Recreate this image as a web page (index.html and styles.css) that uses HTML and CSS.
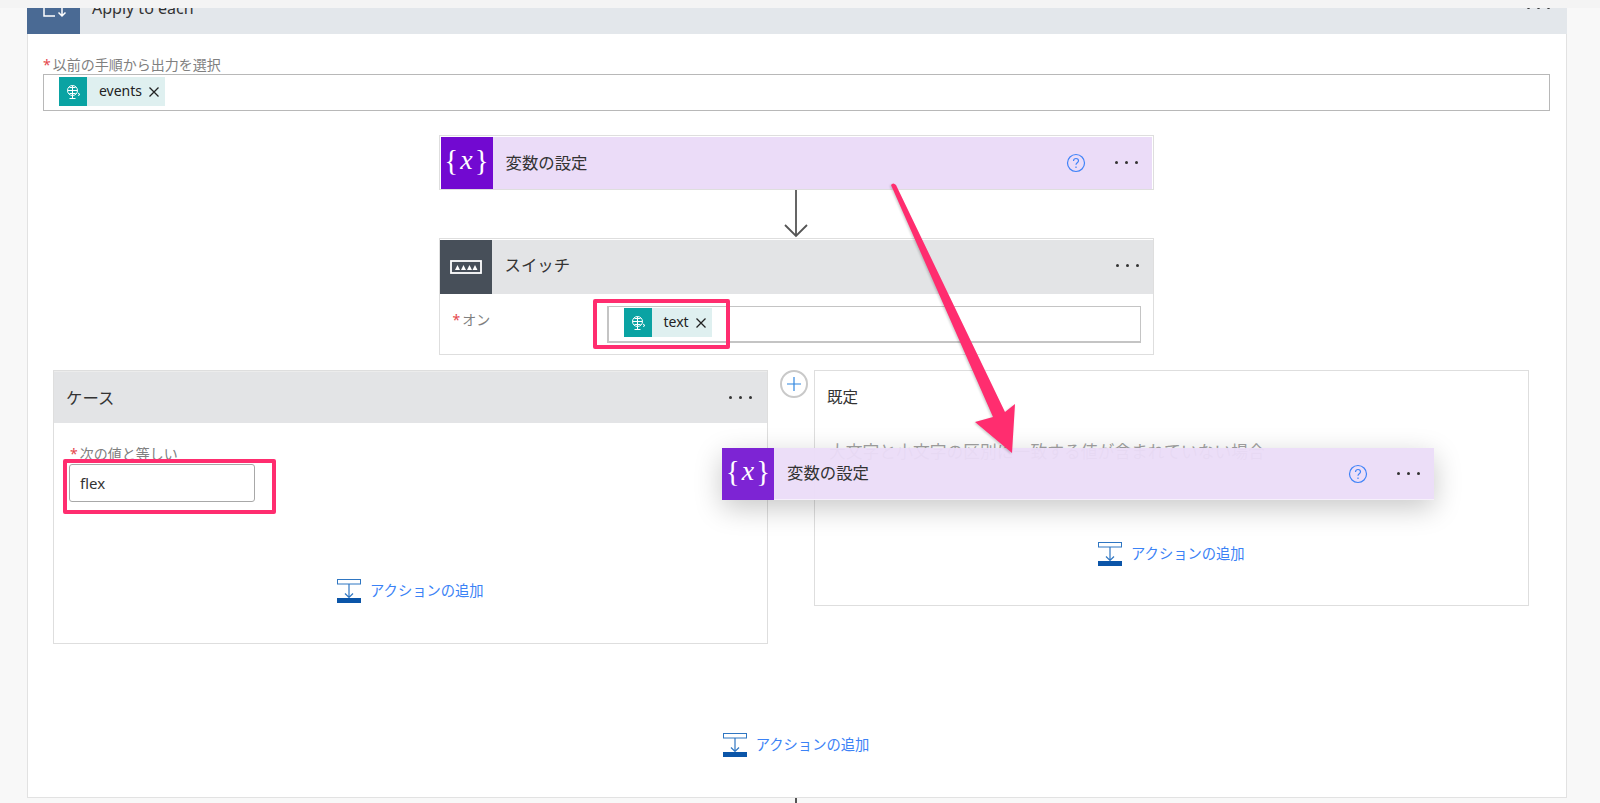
FILE: index.html
```html
<!DOCTYPE html>
<html lang="ja">
<head>
<meta charset="utf-8">
<title>Apply to each</title>
<link rel="stylesheet" href="styles.css">
</head>
<body>
<div class="page">
  <div class="topstrip"></div>

  <div class="loop">
    <div class="loop-head">
      <div class="loop-icon">
        <svg width="30" height="30" viewBox="0 0 30 30" fill="none" stroke="#fff" stroke-width="1.5"><path d="M5 5v18h11"/><path d="M23 14v9M19.500 19.500l3.500 3.500 3.500-3.500"/></svg>
      </div>
      <span class="loop-title">Apply to each</span>
      <span class="dots loop-dots"><i></i><i></i><i></i></span>
    </div>

    <div class="loop-body">
      <div class="field-label"><b>*</b>以前の手順から出力を選択</div>
      <div class="tokenbox">
        <span class="token">
          <span class="token-icon"><svg width="18" height="18" viewBox="0 0 18 18" fill="none" stroke="#fff" stroke-width="1"><circle cx="8.500" cy="7.500" r="5"/><path d="M3.500 7.500h10M8.500 2.500v10M5.500 4.500h6M5.500 10.500h6"/><path d="M8.500 12.500v3M5.500 15.500h6M14 10l2 1.500-2 1"/></svg></span>
          <span class="token-text">events</span>
          <svg class="token-x" width="12" height="12" viewBox="0 0 12 12" stroke="#222" stroke-width="1.300"><path d="M1.500 1.500l9 9M10.500 1.500l-9 9"/></svg>
        </span>
      </div>

      <div class="action action-var">
        <div class="action-head">
          <div class="action-icon icon-var"><span class="brace">{</span><span class="var-x">x</span><span class="brace">}</span></div>
          <span class="action-title">変数の設定</span>
          <svg class="help" width="20" height="20" viewBox="0 0 20 20" fill="none" stroke="#3f83f8" stroke-width="1.200"><circle cx="10" cy="10" r="8.500"/><path d="M7.500 8c0-1.500 1.100-2.500 2.500-2.500s2.500 1 2.500 2.300c0 2-2.500 2-2.500 4"/><path d="M10 13.500v1.500"/></svg>
          <span class="dots"><i></i><i></i><i></i></span>
        </div>
      </div>

      <svg class="connector" width="24" height="48" viewBox="0 0 24 48" fill="none" stroke="#555" stroke-width="1.800"><path d="M12 0v46M1 35l11 11 11-11"/></svg>

      <div class="action action-switch">
        <div class="action-head head-grey switch-head">
          <div class="action-icon icon-switch">
            <svg width="32" height="14" viewBox="0 0 32 14"><rect x="1" y="1" width="30" height="12" fill="none" stroke="#fff" stroke-width="1.800"/><path fill="#fff" d="M5 10l2.500-5 2.500 5zM11 10l2.500-5 2.500 5zM17 10l2.500-5 2.500 5zM22.500 10l2.500-5 2.500 5z"/></svg>
          </div>
          <span class="action-title">スイッチ</span>
          <span class="dots"><i></i><i></i><i></i></span>
        </div>
        <div class="switch-body">
          <div class="switch-label"><b>*</b>オン</div>
          <div class="tokenbox switch-box">
            <span class="token">
              <span class="token-icon"><svg width="18" height="18" viewBox="0 0 18 18" fill="none" stroke="#fff" stroke-width="1"><circle cx="8.500" cy="7.500" r="5"/><path d="M3.500 7.500h10M8.500 2.500v10M5.500 4.500h6M5.500 10.500h6"/><path d="M8.500 12.500v3M5.500 15.500h6M14 10l2 1.500-2 1"/></svg></span>
              <span class="token-text">text</span>
              <svg class="token-x" width="12" height="12" viewBox="0 0 12 12" stroke="#222" stroke-width="1.300"><path d="M1.500 1.500l9 9M10.500 1.500l-9 9"/></svg>
            </span>
          </div>
        </div>
      </div>

      <div class="branches">
        <div class="branch branch-case">
          <div class="branch-head head-grey">
            <span class="action-title">ケース</span>
            <span class="dots"><i></i><i></i><i></i></span>
          </div>
          <div class="case-body">
            <div class="field-label case-label"><b>*</b>次の値と等しい</div>
            <div class="case-input">flex</div>
          </div>
          <a class="add-action case-add">
            <svg width="25" height="24" viewBox="0 0 25 24" fill="none"><rect x="0.500" y="0.500" width="23" height="4.500" stroke="#2f76c2"/><path d="M12 5v13M8 14.500l4 4 4-4" stroke="#2f76c2" stroke-width="1.200"/><rect y="19" width="24" height="5" fill="#0b55a8"/></svg>
            <span>アクションの追加</span>
          </a>
        </div>

        <div class="plus-col">
          <span class="plus"><svg width="14" height="14" viewBox="0 0 14 14" stroke="#2f86e0" stroke-width="1.200"><path d="M7 0v14M0 7h14"/></svg></span>
        </div>

        <div class="branch branch-default">
          <div class="default-title">既定</div>
          <div class="default-note">大文字と小文字の区別に一致する値が含まれていない場合</div>
          <a class="add-action default-add">
            <svg width="25" height="24" viewBox="0 0 25 24" fill="none"><rect x="0.500" y="0.500" width="23" height="4.500" stroke="#2f76c2"/><path d="M12 5v13M8 14.500l4 4 4-4" stroke="#2f76c2" stroke-width="1.200"/><rect y="19" width="24" height="5" fill="#0b55a8"/></svg>
            <span>アクションの追加</span>
          </a>
        </div>
      </div>

      <a class="add-action loop-add">
        <svg width="25" height="24" viewBox="0 0 25 24" fill="none"><rect x="0.500" y="0.500" width="23" height="4.500" stroke="#2f76c2"/><path d="M12 5v13M8 14.500l4 4 4-4" stroke="#2f76c2" stroke-width="1.200"/><rect y="19" width="24" height="5" fill="#0b55a8"/></svg>
        <span>アクションの追加</span>
      </a>
    </div>
  </div>
  <div class="tail"></div>

  <div class="action-float">
    <div class="action-icon icon-float"><span class="brace">{</span><span class="var-x">x</span><span class="brace">}</span></div>
    <span class="action-title">変数の設定</span>
    <svg class="help" width="20" height="20" viewBox="0 0 20 20" fill="none" stroke="#3f83f8" stroke-width="1.200"><circle cx="10" cy="10" r="8.500"/><path d="M7.500 8c0-1.500 1.100-2.500 2.500-2.500s2.500 1 2.500 2.300c0 2-2.500 2-2.500 4"/><path d="M10 13.500v1.500"/></svg>
    <span class="dots"><i></i><i></i><i></i></span>
  </div>

  <div class="mark mark-switch"></div>
  <div class="mark mark-case"></div>

  <svg class="arrow" width="1600" height="803" viewBox="0 0 1600 803">
    <path fill="#ff2d6f" d="M891 185Q893 182 896 185L1005 412 1015 404 1012 453 975 422 993 417Z"/>
  </svg>
</div>
</body>
</html>
```

FILE: styles.css
```css
* {box-sizing: border-box;}
body {margin: 0; font-family: "Noto Sans", "Noto Sans CJK JP", sans-serif; color: #333;}
b {font-weight: normal; color: #e5484d; margin-right: 2px;}

.page {position: relative; height: 803px; overflow: hidden; background-color: #f8f8f8;}
.topstrip {position: relative; z-index: 1; height: 8px; background-color: #f4f4f4;}

.dots {display: flex; gap: 7px; margin-left: auto;}
.dots i {width: 3px; height: 3px; border-radius: 50%; background-color: #333;}

/* outer loop card */
.loop {width: 1540px; height: 817px; margin: -27px 0 0 27px; background-color: #fff; border: solid #e2e2e2; border-width: 0 1px 1px 1px;}
.loop-head {display: flex; align-items: center; height: 53px; margin: 0 -1px; padding-right: 17px; background-color: #e3e7eb;}
.loop-icon {display: flex; align-items: center; justify-content: center; width: 53px; height: 53px; background-color: #4a6a94;}
.loop-title {margin-left: 12px; font-size: 16px; color: #333;}
.loop-body {display: flex; flex-direction: column; align-items: flex-start; padding: 0 17px 0 15px;}

.field-label {height: 17px; margin-top: 22px; margin-bottom: 1px; font-size: 14px; line-height: 17px; color: #808080; white-space: nowrap;}
.tokenbox {display: flex; flex: none; align-items: center; width: 1507px; height: 37px; padding: 0 0 2px 15px; background-color: #fff; border: 1px solid #b8b8b8;}
.token {display: flex; align-items: center; height: 29px; background-color: #dff0f0;}
.token-icon {display: flex; align-items: center; justify-content: center; width: 28px; height: 29px; background-color: #0aa3a3;}
.token-text {margin: -2px 6px 0 12px; font-size: 14px; line-height: 29px; color: #222;}
.token-x {margin-right: 5px;}

/* action cards */
.action {width: 715px; background-color: #fff; border: 1px solid #dedede;}
.action-var {align-self: center; margin-top: 24px; padding: 1px; height: 55px;}
.action-head {display: flex; align-items: center; height: 52px; padding-right: 14px; background-color: #ebdcf8;}
.action-head .action-title {margin: -2px 0 0 13px;}
.action-head .dots {margin-top: -2px;}
.action-switch {align-self: center; height: 117px; padding-top: 1px;}
.switch-head {height: 54px;}
.switch-head .action-title {margin-top: -6px;}
.switch-head .dots {margin-top: -3px;}
.head-grey {background-color: #e3e4e6;}
.action-icon {display: flex; align-items: center; justify-content: center; flex: none; width: 52px; height: 52px; color: #fff;}
.switch-head .action-icon {height: 54px;}
.icon-var {background-color: #7209d1;}
.icon-float {background-color: #7d24d4;}
.icon-switch {background-color: #474f59;}
.action-title {margin-left: 12px; font-size: 16.400px; color: #333; white-space: nowrap;}
.brace {font: 29px "Liberation Serif", serif; line-height: 1; margin-top: -5px;}
.var-x {margin: -6px 2px 0; font: italic 28px "Liberation Serif", serif; line-height: 1;}
.help {margin-left: auto;}
.help + .dots {margin-left: 29px;}

.connector {align-self: center; flex: none; display: block;}

.switch-body {display: flex; padding: 12px 12px 0 13px;}
.switch-label {width: 155px; margin-top: 5px; font-size: 14px; line-height: 17px; color: #808080;}
.switch-box {width: 534px; padding: 0 0 3px 15px; border-color: #c4c4c4; border-width: 1px 1px 2px 2px;}
.switch-box .token-text {margin-top: -3px;}

/* case / default branches */
.branches {display: flex; align-items: flex-start; margin: 15px 0 0 10px;}
.branch {position: relative; flex: none; width: 715px; background-color: #fff; border: 1px solid #dedede;}
.branch-case {height: 274px;}
.branch-default {height: 236px;}
.branch-head {display: flex; align-items: center; height: 52px; padding-right: 15px; border-top: 1px solid #ececec;}
.branch-head .action-title {margin-top: -2px;}
.plus-col {flex: none; width: 46px; padding: 0 0 0 12px;}
.plus {display: flex; align-items: center; justify-content: center; width: 28px; height: 28px; border: 2px solid #c9c9c9; border-radius: 50%;}

.case-body {padding: 0 0 0 15px;}
.case-label {margin: 22px 0 0 1px; font-size: 14px;}
.case-input {width: 186px; height: 38px; margin-top: 2px; padding-left: 10px; border: 1px solid #a8a8a8; border-radius: 3px; font-size: 15px; line-height: 36px; color: #333;}
.case-add {margin: 77px 0 0 283px;}

.default-title {margin: 16px 0 0 12px; font-size: 15.500px; line-height: 20px; color: #333;}
.default-note {margin: 35px 0 0 14px; font-size: 16.800px; line-height: 20px; color: #a2a2a2; white-space: nowrap;}
.default-add {margin: 80px 0 0 283px;}

.add-action {display: flex; align-items: center; gap: 8px; font-size: 14.300px; line-height: 24px; color: #3b82f6; white-space: nowrap;}
.loop-add {align-self: center; margin-top: 89px;}

.tail {width: 2px; height: 12px; margin-left: 795px; background-color: #555;}

/* dragged copy over the board */
.action-float {position: absolute; left: 722px; top: 448px; display: flex; align-items: center; width: 712px; height: 52px; padding-right: 14px; background-color: rgba(235, 220, 248, .95); border-bottom: 1px solid #f6f0fb; box-shadow: 0 8px 28px rgba(0, 0, 0, .22);}
.action-float .action-title {margin: -4px 0 0 13px;}

/* annotations */
.mark {position: absolute; border: 4px solid #ff2d6f; border-radius: 2px;}
.mark-switch {left: 593px; top: 299px; width: 137px; height: 50px;}
.mark-case {left: 63px; top: 459px; width: 213px; height: 55px;}
.arrow {position: absolute; left: 0; top: 0; filter: drop-shadow(-1px 1px 1px rgba(0, 0, 0, .2));}
```
